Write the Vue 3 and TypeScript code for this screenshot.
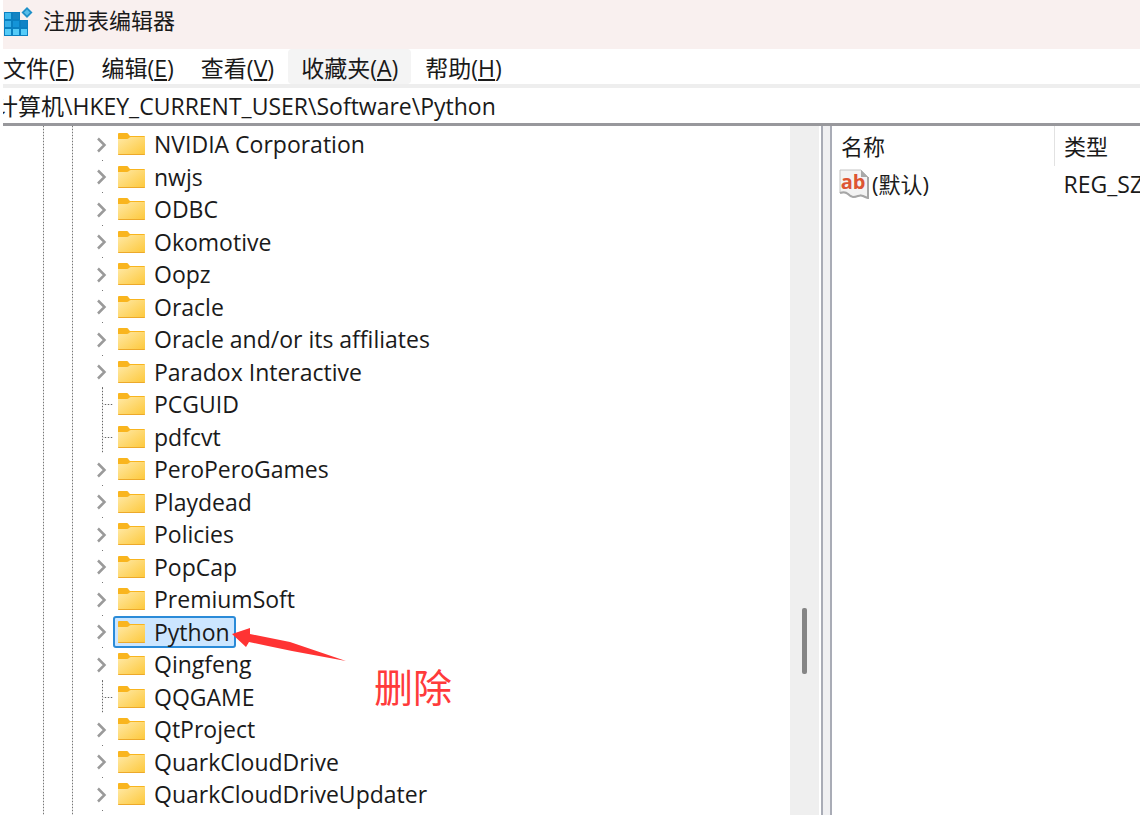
<script setup lang="ts">
import { ref } from 'vue'

interface TreeKey {
  name: string
  leaf?: boolean
}

interface Menu {
  label: string
  key: string
  active?: boolean
}

const menus: Menu[] = [
  { label: '文件', key: 'F' },
  { label: '编辑', key: 'E' },
  { label: '查看', key: 'V' },
  { label: '收藏夹', key: 'A', active: true },
  { label: '帮助', key: 'H' },
]

const keys: TreeKey[] = [
  { name: 'NVIDIA Corporation' },
  { name: 'nwjs' },
  { name: 'ODBC' },
  { name: 'Okomotive' },
  { name: 'Oopz' },
  { name: 'Oracle' },
  { name: 'Oracle and/or its affiliates' },
  { name: 'Paradox Interactive' },
  { name: 'PCGUID', leaf: true },
  { name: 'pdfcvt', leaf: true },
  { name: 'PeroPeroGames' },
  { name: 'Playdead' },
  { name: 'Policies' },
  { name: 'PopCap' },
  { name: 'PremiumSoft' },
  { name: 'Python' },
  { name: 'Qingfeng' },
  { name: 'QQGAME', leaf: true },
  { name: 'QtProject' },
  { name: 'QuarkCloudDrive' },
  { name: 'QuarkCloudDriveUpdater' },
]

const selected = ref('Python')
const path = ref('计算机\\HKEY_CURRENT_USER\\Software\\Python')
</script>

<template>
  <div class="window">
    <header class="titlebar">
      <svg class="app-icon" viewBox="0 0 30 30" aria-hidden="true">
        <path d="M1 5h16v8h8v16H1z" fill="#0a7fc0" />
        <path d="M2 6h6v6H2z" fill="#3fb9ee" />
        <path d="M10 6h6v6h-6z" fill="#1583c2" />
        <path d="M2 14h6v6H2z" fill="#35aee8" />
        <path d="M10 14h6v6h-6z" fill="#1494d8" />
        <path d="M18 14h6v6h-6z" fill="#1083c6" />
        <path d="M2 22h6v6H2zM10 22h6v6h-6zM18 22h6v6h-6z" fill="#55cbf8" />
        <path d="M24 0l5.500 5.500L24 11l-5.500-5.500z" fill="#1e8fc8" />
        <path d="M24 2.500l3 3-3 3-3-3z" fill="#58bde8" />
      </svg>
      <h1>注册表编辑器</h1>
    </header>

    <nav class="menubar">
      <button v-for="m in menus" :key="m.key" type="button" :class="{ active: m.active }">{{ m.label }}(<u>{{ m.key }}</u>)</button>
    </nav>

    <div class="address">
      <input v-model="path" type="text" aria-label="地址" spellcheck="false" />
    </div>

    <main class="panes">
      <section class="tree-pane">
        <ul class="tree">
          <li v-for="k in keys" :key="k.name" :class="{ leaf: k.leaf }">
            <span class="branch">
              <svg v-if="!k.leaf" class="chevron" viewBox="0 0 10 16" aria-hidden="true">
                <path d="M1 1.500L7.500 8 1 14.500" fill="none" stroke="#9a9a9a" stroke-width="2.500" />
              </svg>
            </span>
            <button type="button" :class="{ selected: selected === k.name }" @click="selected = k.name">
              <svg class="folder" viewBox="0 0 27 22" aria-hidden="true">
                <defs>
                  <linearGradient id="paper" x1="0" y1="0" x2="1" y2="1">
                    <stop offset="0" stop-color="#ffe9a6" />
                    <stop offset="1" stop-color="#fdc83a" />
                  </linearGradient>
                </defs>
                <path d="M1 0h8q1 0 2 2l1 1h14q1 0 1 1v8H0V1q0-1 1-1z" fill="#f9b51e" />
                <path d="M0 6h9q1 0 2-1t2-1h14v17q0 1-1 1H1q-1 0-1-1z" fill="url(#paper)" />
                <path d="M0 21h27q0 1-1 1H1q-1 0-1-1z" fill="#eda92a" />
              </svg>
              <span>{{ k.name }}</span>
            </button>
          </li>
        </ul>
        <div class="scrollbar"><div class="thumb"></div></div>

        <div class="note">
          <svg viewBox="0 0 114 34" aria-hidden="true">
            <path d="M0 6L18 0v6l40 8 56 19-54-10-24-5-19-4-3 5z" fill="#ff3333" />
          </svg>
          <span>删除</span>
        </div>
      </section>

      <div class="splitter"></div>

      <section class="values">
        <table>
          <thead>
            <tr><th>名称</th><th>类型</th></tr>
          </thead>
          <tbody>
            <tr>
              <td>
                <div class="value-name">
                  <svg viewBox="0 0 30 30" aria-hidden="true">
                    <path d="M1 1h21l7 7v21q-3 0-5-2t-5 0-5 1-5-3-8-1z" fill="#f3f3f3" stroke="#c4c4c4" stroke-width="1" />
                    <path d="M1 24q5-2 8 1t5 3 5-1 5 0 5 2V8" fill="none" stroke="#a6a6a6" stroke-width="2" />
                    <path d="M22 1v7h7z" fill="#a9a9a9" />
                    <text x="14" y="20" text-anchor="middle">ab</text>
                  </svg>
                  <span>(默认)</span>
                </div>
              </td>
              <td class="type">REG_SZ</td>
            </tr>
          </tbody>
        </table>
      </section>
    </main>
  </div>
</template>

<style>
body {
  margin: 0;
  background: #fff;
}
</style>

<style scoped>
.window {
  box-sizing: border-box;
  display: flex;
  flex-direction: column;
  height: 100vh;
  padding-left: 3px;
  overflow: hidden;
  color: #1a1a1a;
  font: 23px/32px "Open Sans", "Noto Sans CJK SC", sans-serif;
}

button,
input {
  margin: 0;
  border: 0;
  background: none;
  color: inherit;
  font: inherit;
}

.titlebar {
  display: flex;
  flex: none;
  align-items: center;
  gap: 10px;
  height: 49px;
  box-sizing: border-box;
  padding-bottom: 5px;
  background: #f9f0ef;
}

.app-icon {
  width: 30px;
  height: 30px;
}

h1 {
  margin: 0;
  padding-bottom: 5px;
  font-size: 22px;
  font-weight: 400;
}

.menubar {
  display: flex;
  flex: none;
  gap: 1px;
  height: 35px;
  border-bottom: 4px solid #eee;
}

.menubar button {
  box-sizing: border-box;
  height: 35px;
  padding: 3px 13px 0;
  border-radius: 4px;
  line-height: 32px;
  white-space: nowrap;
}

.menubar button:first-child {
  padding-left: 0;
}

.menubar button.active {
  background: #f4f4f4;
}

u {
  text-underline-offset: 2px;
  text-decoration-thickness: 2px;
}

.address {
  display: flex;
  flex: none;
  height: 35px;
  border-bottom: 3px solid #98989c;
  overflow: hidden;
}

.address input {
  flex: 1;
  min-width: 0;
  padding: 0;
  outline: 0;
  text-indent: -8px;
}

.panes {
  display: grid;
  flex: 1;
  grid-template-columns: minmax(0, 818fr) 11px minmax(0, 308fr);
  min-height: 0;
}

.tree-pane {
  position: relative;
  display: flex;
  min-width: 0;
  overflow: hidden;
}

.tree {
  flex: 1;
  min-width: 0;
  margin: 0;
  padding: 2px 0 0 94px;
  list-style: none;
  background:
    repeating-linear-gradient(#777 0 1px, #d8d8d8 1px 3px) 40px 0 / 1px 100% no-repeat,
    repeating-linear-gradient(#777 0 1px, #d8d8d8 1px 3px) 69px 0 / 1px 100% no-repeat;
}

.tree li {
  display: flex;
  height: 33px;
}

.tree li:nth-child(even) {
  height: 32px;
}

.branch {
  display: flex;
  flex: none;
  align-items: center;
  width: 16px;
  background: linear-gradient(#777, #777) 5px 100% / 1px 1px no-repeat;
}

.leaf .branch {
  background:
    repeating-linear-gradient(#666 0 1px, #ddd 1px 3px) 5px 0 / 1px 100% no-repeat,
    repeating-linear-gradient(90deg, #666 0 1px, #ddd 1px 3px) 5px 50% / 11px 1px no-repeat;
}

.chevron {
  width: 10px;
  height: 16px;
}

.tree button {
  display: flex;
  align-items: center;
  gap: 9px;
  box-sizing: border-box;
  height: 32px;
  padding: 0 4px 0 3px;
  border: 2px solid transparent;
  border-radius: 3px;
  line-height: 28px;
  white-space: nowrap;
}

.tree button.selected {
  border-color: #2a8bd8;
  background: #cce6ff;
}

.folder {
  width: 27px;
  height: 22px;
}

.scrollbar {
  position: relative;
  flex: none;
  width: 29px;
  margin-right: 2px;
  background: #efefef;
}

.thumb {
  position: absolute;
  top: 70%;
  left: 12px;
  width: 5px;
  height: 66px;
  border-radius: 2px;
  background: #858585;
}

.note {
  position: absolute;
  top: 502px;
  left: 229px;
  display: flex;
  flex-direction: column;
  color: #ff3b3b;
  font-size: 39px;
  line-height: 50px;
}

.note svg {
  width: 114px;
  height: 34px;
}

.note span {
  padding-left: 142px;
}

.splitter {
  box-sizing: border-box;
  border: solid #a9acb6;
  border-width: 0 2px;
  background: #f0f0f2;
}

.values {
  overflow: hidden;
}

table {
  width: 100%;
  border-collapse: collapse;
  table-layout: fixed;
  font-size: 22px;
}

th,
td {
  padding: 0 0 0 9px;
  font-weight: 400;
  text-align: left;
  white-space: nowrap;
}

th {
  height: 40px;
  border-right: 1px solid #e2e2e2;
}

th:first-child {
  width: 213px;
}

th:last-child {
  border-right: 0;
}

td {
  height: 35px;
}

td:first-child {
  padding-left: 7px;
}

.type {
  font-size: 23px;
}

.value-name {
  display: flex;
  align-items: center;
  gap: 3px;
}

.value-name svg {
  width: 30px;
  height: 30px;
}

.value-name text {
  fill: #dd5533;
  font: 700 20px "Open Sans", sans-serif;
}
</style>
